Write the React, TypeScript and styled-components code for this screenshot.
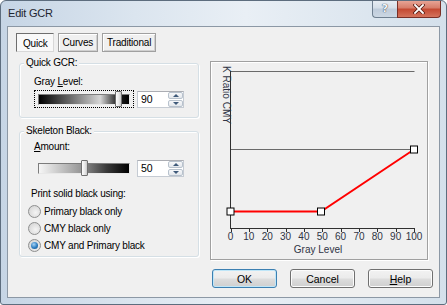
import React from 'react';
import styled, { createGlobalStyle, css } from 'styled-components';

const GlobalStyle = createGlobalStyle`
  html, body { margin: 0; padding: 0; background: #fff; }
  body {
    font-family: "Liberation Sans", Arial, sans-serif;
    font-size: 10px;
    color: #000;
  }
  * { box-sizing: border-box; }
`;

const Window = styled.div`
  width: 447px;
  height: 305px;
  border: 1px solid #5d6d7e;
  border-radius: 6px 6px 3px 3px;
  background: linear-gradient(to right, #c6d5e5 0%, #dbe5ef 30%, #e9eff5 55%, #d4e0eb 100%);
  display: flex;
  flex-direction: column;
  overflow: hidden;
`;

const TitleBar = styled.div`
  height: 25px;
  display: flex;
  align-items: flex-start;
  padding-left: 7px;
`;

const Title = styled.div`
  flex: 1;
  line-height: 24px;
  font-size: 11px;
  letter-spacing: -0.2px;
  color: #1e2530;
`;

const CaptionButton = styled.div<{ $close?: boolean }>`
  margin-top: -1px;
  height: 18px;
  display: flex;
  align-items: center;
  justify-content: center;
  border: 1px solid #6f7f90;
  border-top: none;
  ${p => p.$close ? css`
    width: 44px;
    margin-right: 5px;
    border-color: #7a2f26;
    border-radius: 0 0 4px 0;
    background: linear-gradient(to bottom, #e9a99b 0%, #d77e6b 45%, #c44a33 55%, #d4735c 100%);
  ` : css`
    width: 25px;
    border-right: none;
    border-radius: 0 0 0 4px;
    background: linear-gradient(to bottom, #e9eef4 0%, #d6dfe9 45%, #bfccdb 55%, #ccd7e3 100%);
  `}
`;

const HelpGlyph = styled.span`
  font-family: "DejaVu Sans", sans-serif;
  font-weight: bold;
  font-size: 11px;
  color: #f4f6f8;
  text-shadow: 0 0 1px #3a4656, 0 0 1px #3a4656;
`;

const Client = styled.div`
  flex: 1;
  margin: 0 6px 6px 6px;
  border: 1px solid #8c98a5;
  background: #f0f0f0;
  display: flex;
  flex-direction: column;
  padding: 6px 0 0 11px;
`;

const TabRow = styled.div`
  display: flex;
  gap: 4px;
  margin-left: -3px;
  height: 19px;
`;

const Tab = styled.div<{ $active?: boolean }>`
  height: 19px;
  padding: 0 4px;
  display: flex;
  align-items: center;
  font-size: 10px;
  letter-spacing: -0.2px;
  border: 1px solid #a0a0a0;
  ${p => p.$active ? css`
    background: #f9f9f9;
    border-color: #6e6e6e #d8d8d8 #d8d8d8 #6e6e6e;
    padding: 2px 5px 0 6px;
  ` : css`
    background: #f0f0f0;
    box-shadow: inset 1px 1px 0 #fff, inset -1px -1px 0 #d0d0d0;
  `}
`;

const Main = styled.div`
  display: flex;
  align-items: flex-start;
  gap: 11px;
  margin-top: 9px;
  height: 199px;
`;

const LeftColumn = styled.div`
  width: 180px;
  margin-top: 2px;
  display: flex;
  flex-direction: column;
  gap: 13px;
`;

const Group = styled.div<{ $pt: number; $pb: number }>`
  position: relative;
  border: 1px solid #d5dfe5;
  border-radius: 3px;
  box-shadow: inset 1px 1px 0 #fff, 1px 1px 0 #fff;
  padding: ${p => p.$pt}px 0 ${p => p.$pb}px 8px;
  display: flex;
  flex-direction: column;
`;

const GroupTitle = styled.span`
  position: absolute;
  left: 4px;
  top: -7px;
  padding: 0 2px;
  line-height: 12px;
  background: #f0f0f0;
  letter-spacing: -0.2px;
`;

const Label = styled.div<{ $indent?: number; $mt?: number }>`
  line-height: 12px;
  margin-left: ${p => p.$indent ?? 6}px;
  margin-top: ${p => p.$mt ?? 0}px;
  letter-spacing: -0.2px;
`;

const ControlRow = styled.div<{ $mt: number }>`
  display: flex;
  align-items: center;
  gap: 3px;
  margin-left: 6px;
  margin-top: ${p => p.$mt}px;
  height: 18px;
`;

const SliderBox = styled.div<{ $focus?: boolean }>`
  position: relative;
  width: 100px;
  height: 18px;
  padding: 0 3px;
  display: flex;
  align-items: center;
  border: 1px dotted ${p => p.$focus ? '#000' : 'transparent'};
`;

const Track = styled.div<{ $fill: string }>`
  position: relative;
  width: 100%;
  height: 11px;
  border: 1px solid;
  border-color: #7c7c7c #e8e8e8 #e8e8e8 #7c7c7c;
  background: ${p => p.$fill};
`;

const Thumb = styled.div<{ $pos: number }>`
  position: absolute;
  top: -4px;
  left: ${p => p.$pos}%;
  width: 7px;
  height: 16px;
  border: 1px solid #707070;
  border-radius: 1px;
  background: linear-gradient(to right, #fdfdfd 0%, #e6e6e6 60%, #c8c8c8 100%);
`;

const SpinEdit = styled.div`
  width: 47px;
  height: 17px;
  border: 1px solid #c5cbd3;
  border-top-color: #abadb3;
  background: #fff;
  display: flex;
  align-items: center;
  justify-content: space-between;
  padding-left: 3px;
  font-size: 10.5px;
`;

const SpinButtons = styled.div`
  width: 15px;
  height: 15px;
  display: flex;
  flex-direction: column;
  gap: 1px;
`;

const SpinButton = styled.div<{ $down?: boolean }>`
  flex: 1;
  border: 1px solid #b8c2cd;
  border-radius: 2px;
  background: linear-gradient(to bottom, #f7f8fa, #e3e7ec);
  display: flex;
  align-items: center;
  justify-content: center;
  &::after {
    content: "";
    width: 0;
    height: 0;
    border-left: 3px solid transparent;
    border-right: 3px solid transparent;
    ${p => p.$down
      ? css`border-top: 3px solid #3f5a7a;`
      : css`border-bottom: 3px solid #3f5a7a;`}
  }
`;

const RadioList = styled.div`
  display: flex;
  flex-direction: column;
  margin-top: 3px;
`;

const RadioRow = styled.div`
  height: 17px;
  display: flex;
  align-items: center;
  gap: 3px;
  letter-spacing: -0.2px;
`;

const RadioDot = styled.span<{ $checked?: boolean }>`
  position: relative;
  width: 13px;
  height: 13px;
  border-radius: 50%;
  border: 1px solid #8e8f8f;
  background: radial-gradient(circle at 60% 60%, #f4f4f4 0%, #dadada 70%, #c8c8c8 100%);
  ${p => p.$checked && css`
    &::after {
      content: "";
      position: absolute;
      left: 2px;
      top: 2px;
      width: 7px;
      height: 7px;
      border-radius: 50%;
      background: radial-gradient(circle at 40% 35%, #a6d3f5 0%, #2b7cc0 55%, #144d80 100%);
    }
  `}
`;

const ChartFrame = styled.div`
  width: 218px;
  height: 199px;
  border: 1px solid #a0a0a0;
  box-shadow: inset 1px 1px 0 #fff, 1px 1px 0 #fff;
`;

const ButtonRow = styled.div`
  display: flex;
  justify-content: flex-end;
  gap: 13px;
  margin-top: 9px;
  padding-right: 6px;
`;

const Button = styled.div<{ $default?: boolean }>`
  width: 65px;
  height: 19px;
  display: flex;
  align-items: center;
  justify-content: center;
  font-size: 10.5px;
  border-radius: 3px;
  border: 1px solid ${p => p.$default ? '#3c7fb1' : '#707070'};
  background: linear-gradient(to bottom, #f2f2f2 0%, #ebebeb 48%, #dddddd 52%, #cfcfcf 100%);
  box-shadow: inset 0 0 0 1px ${p => p.$default ? '#bfe6f8' : '#fcfcfc'};
`;

const ticks = [0, 10, 20, 30, 40, 50, 60, 70, 80, 90, 100];

function Chart() {
  const x0 = 19.5;
  const x1 = 203;
  const step = (x1 - x0) / 10;
  const pts: [number, number][] = [[19.5, 149.5], [110, 149.5], [203, 87.5]];
  return (
    <svg width="216" height="197" viewBox="0 0 216 197">
      <line x1={x0} y1={9.5} x2={x1 + 0.5} y2={9.5} stroke="#6a6a6a" />
      <line x1={x0} y1={87.5} x2={x1 + 0.5} y2={87.5} stroke="#6a6a6a" />
      <line x1={x0} y1={9} x2={x0} y2={167} stroke="#303030" />
      <line x1={x0} y1={166.5} x2={x1 + 0.5} y2={166.5} stroke="#303030" />
      {ticks.map((t, i) => (
        <g key={t}>
          <line x1={Math.round(x0 + i * step) + 0.5} y1={166} x2={Math.round(x0 + i * step) + 0.5} y2={170} stroke="#303030" />
          <text x={x0 + i * step} y={177.5} fontSize="10" textAnchor="middle" fill="#2f3445" fontFamily="Liberation Sans, Arial, sans-serif">{t}</text>
        </g>
      ))}
      <text x={107} y={190.5} fontSize="10" textAnchor="middle" fill="#2f3445" fontFamily="Liberation Sans, Arial, sans-serif">Gray Level</text>
      <text x={12} y={33} fontSize="10" textAnchor="middle" fill="#2f3445" fontFamily="Liberation Sans, Arial, sans-serif" transform="rotate(90 12 33)">K Ratio CMY</text>
      <polyline points={pts.map(p => p.join(',')).join(' ')} fill="none" stroke="#ff0000" strokeWidth="2" />
      {pts.map((p, i) => (
        <rect key={i} x={p[0] - 3.5} y={p[1] - 3.5} width="7" height="7" fill="#fff" stroke="#000" />
      ))}
    </svg>
  );
}

function Spin({ value }: { value: number }) {
  return (
    <SpinEdit>
      <span>{value}</span>
      <SpinButtons>
        <SpinButton />
        <SpinButton $down />
      </SpinButtons>
    </SpinEdit>
  );
}

export default function App() {
  return (
    <>
      <GlobalStyle />
      <Window>
        <TitleBar>
          <Title>Edit GCR</Title>
          <CaptionButton><HelpGlyph>?</HelpGlyph></CaptionButton>
          <CaptionButton $close>
            <svg width="12" height="10" viewBox="0 0 12 10">
              <path d="M2 1 L10 9 M10 1 L2 9" stroke="#5a1d14" strokeWidth="3.4" strokeLinecap="square" />
              <path d="M2 1 L10 9 M10 1 L2 9" stroke="#fff" strokeWidth="1.8" strokeLinecap="square" />
            </svg>
          </CaptionButton>
        </TitleBar>
        <Client>
          <TabRow>
            <Tab $active>Quick</Tab>
            <Tab>Curves</Tab>
            <Tab>Traditional</Tab>
          </TabRow>
          <Main>
            <LeftColumn>
              <Group $pt={12} $pb={9}>
                <GroupTitle>Quick GCR:</GroupTitle>
                <Label>Gray <u>L</u>evel:</Label>
                <ControlRow $mt={2}>
                  <SliderBox $focus>
                    <Track $fill="linear-gradient(to right, #000 0%, #6a6a6a 35%, #d6d6d6 68%, #2a2a2a 86%, #000 100%)">
                      <Thumb $pos={84} />
                    </Track>
                  </SliderBox>
                  <Spin value={90} />
                </ControlRow>
              </Group>
              <Group $pt={9} $pb={2}>
                <GroupTitle>Skeleton Black:</GroupTitle>
                <Label><u>A</u>mount:</Label>
                <ControlRow $mt={6}>
                  <SliderBox>
                    <Track $fill="linear-gradient(to right, #f6f6f6 0%, #9a9a9a 45%, #3a3a3a 75%, #000 100%)">
                      <Thumb $pos={47} />
                    </Track>
                  </SliderBox>
                  <Spin value={50} />
                </ControlRow>
                <Label $indent={3} $mt={11}>Print solid black using:</Label>
                <RadioList>
                  <RadioRow><RadioDot />Primary black only</RadioRow>
                  <RadioRow><RadioDot />CMY black only</RadioRow>
                  <RadioRow><RadioDot $checked />CMY and Primary black</RadioRow>
                </RadioList>
              </Group>
            </LeftColumn>
            <ChartFrame>
              <Chart />
            </ChartFrame>
          </Main>
          <ButtonRow>
            <Button $default>OK</Button>
            <Button>Cancel</Button>
            <Button><span><u>H</u>elp</span></Button>
          </ButtonRow>
        </Client>
      </Window>
    </>
  );
}
